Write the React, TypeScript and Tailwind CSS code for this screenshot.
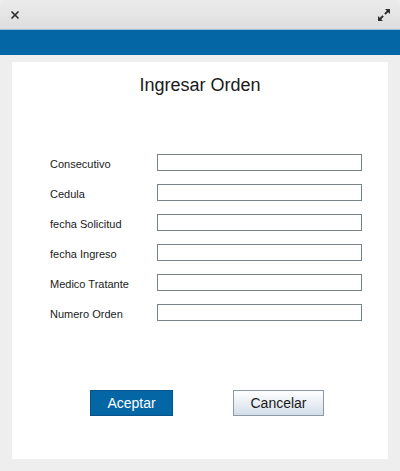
import { X } from "lucide-react"

const fields = ["Consecutivo", "Cedula", "fecha Solicitud", "fecha Ingreso", "Medico Tratante", "Numero Orden"]

export default function App() {
  return (
    <div className="w-[400px] h-[471px] flex flex-col bg-[#eeeeee] font-['Liberation_Sans',Arial,sans-serif] text-[#1a1a1a] overflow-hidden">
      {/* window title bar */}
      <div className="h-[30px] shrink-0 flex items-center justify-between px-[9px] rounded-t-[6px] bg-gradient-to-b from-[#ebebeb] to-[#dedede] border-b border-[#9cc0de]">
        <X className="w-[12px] h-[12px] text-[#2e2e2e]" strokeWidth={3.5} />
        <svg width="14" height="14" viewBox="0 0 14 14" className="text-[#2e2e2e]">
          <path d="M8 1h5v5l-1.8-1.8-2.6 2.6-1.4-1.4 2.6-2.6z" fill="currentColor" />
          <path d="M6 13H1V8l1.8 1.8 2.6-2.6 1.4 1.4-2.6 2.6z" fill="currentColor" />
        </svg>
      </div>
      <div className="h-[25px] shrink-0 bg-[#0566a6]" />

      <div className="flex-1 px-[12px] pt-[7px] pb-[12px]">
        <div className="h-[397px] bg-white flex flex-col">
          <h1 className="text-[18px] leading-[21px] text-center pt-[13px]">Ingresar Orden</h1>

          <div className="flex flex-col gap-[13px] mt-[58px] pl-[38px]">
            {fields.map((f) => (
              <div key={f} className="flex items-center h-[17px]">
                <span className="w-[107px] text-[11px] leading-[13px] pt-[4px]">{f}</span>
                <input className="w-[205px] h-[17px] border border-[#7a8289] bg-white outline-none" />
              </div>
            ))}
          </div>

          <div className="flex mt-[69px] pl-[78px]">
            <button className="w-[83px] h-[26px] bg-[#0566a6] text-white text-[14px] border border-[#04548a]">
              Aceptar
            </button>
            <button className="ml-[60px] w-[91px] h-[26px] bg-gradient-to-b from-[#ffffff] to-[#d3dee9] text-[#1a1a1a] text-[14px] border border-[#8c99a6]">
              Cancelar
            </button>
          </div>
        </div>
      </div>
    </div>
  )
}
